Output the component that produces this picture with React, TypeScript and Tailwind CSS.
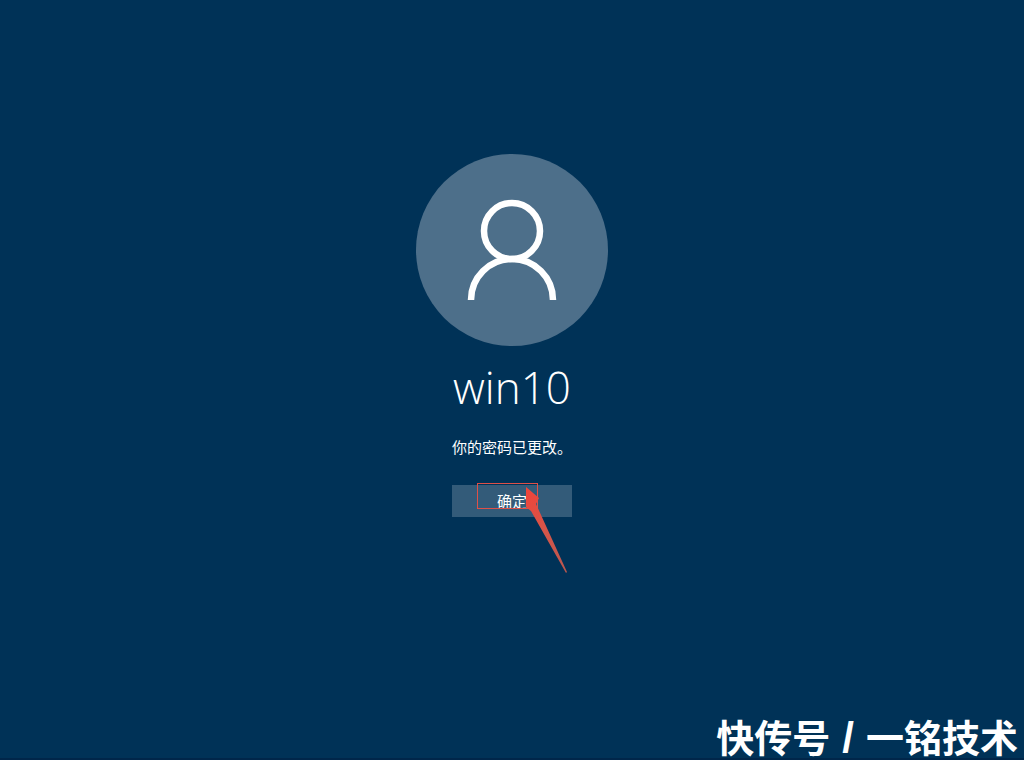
import { useState } from 'react';

const UserAvatar = () => (
  <div className="size-48 rounded-full bg-[#4d6f8a]">
    <svg viewBox="0 0 192 192" className="size-full" fill="none" stroke="#ffffff" strokeWidth="6.5" aria-hidden="true">
      <circle cx="96" cy="77" r="28" />
      <path d="M55 146A41 41 0 0 1 137 146" />
    </svg>
  </div>
);

// red box and arrow drawn over the confirm button
const Annotation = () => (
  <div className="pointer-events-none absolute left-6 -top-1 size-24" aria-hidden="true">
    <div className="absolute top-0.5 left-px h-[26px] w-[61px] border border-[#de5048]" />
    <svg viewBox="0 0 96 96" className="absolute inset-0 size-full">
      <defs>
        <linearGradient id="arrow" x1="50" y1="10" x2="90" y2="92" gradientUnits="userSpaceOnUse">
          <stop offset="0" stopColor="#f0443a" />
          <stop offset="0.5" stopColor="#d4564a" />
          <stop offset="1" stopColor="#b8564f" />
        </linearGradient>
      </defs>
      <path d="M50 6L63 17L60 23L91 91L90 92L55 30L50 26Z" fill="url(#arrow)" />
    </svg>
  </div>
);

const App = () => {
  const [confirmed, setConfirmed] = useState(false);

  return (
    <div className="relative flex min-h-screen flex-col items-center border-b-2 border-[#00264a] bg-[#003257] pt-[154px] font-['Noto_Sans_CJK_SC',sans-serif] text-white">
      <main className="flex flex-col items-center">
        <UserAvatar />
        <h1 className="mt-2 text-[44px] leading-[67px] font-light font-['Open_Sans',sans-serif]">win10</h1>
        <p className="mt-4 text-[15px] leading-5">你的密码已更改。</p>
        <div className="relative mt-7">
          <button
            type="button"
            aria-pressed={confirmed}
            onClick={() => setConfirmed(true)}
            className="h-8 w-30 bg-[#335b79] text-[15px] leading-8"
          >
            确定
          </button>
          <Annotation />
        </div>
      </main>
      <footer className="absolute right-1.5 bottom-0 flex items-baseline gap-3 text-[38px] leading-[38px] font-bold font-['Liberation_Sans','Noto_Sans_CJK_SC',sans-serif]">
        <span>快传号</span>
        <span className="text-[42px]">/</span>
        <span>一铭技术</span>
      </footer>
    </div>
  );
};

export default App;
